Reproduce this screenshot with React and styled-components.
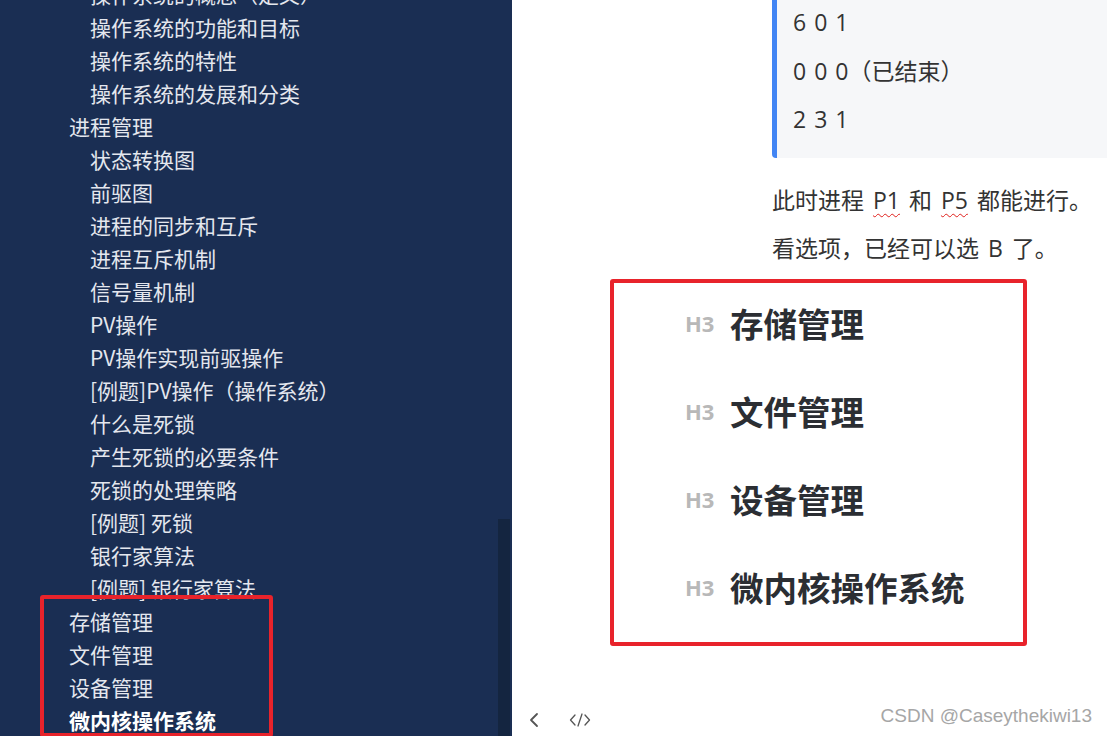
import React from "react";
import styled, { createGlobalStyle } from "styled-components";

const GlobalStyle = createGlobalStyle`
  html, body { margin: 0; padding: 0; }
  body { overflow: hidden; background: #ffffff; }
  * { box-sizing: border-box; }
`;

const CJK = `"Noto Sans CJK SC", "Noto Sans", sans-serif`;
const BODY = `"Open Sans", "Noto Sans CJK SC", sans-serif`;

const Page = styled.div`
  display: flex;
  width: 1107px;
  height: 736px;
  overflow: hidden;
`;

const Sidebar = styled.aside`
  position: relative;
  width: 512px;
  flex: none;
  height: 100%;
  background: #1a2e53;
  overflow: hidden;
`;

const TocList = styled.ul`
  list-style: none;
  margin: -22px 0 0;
  padding: 0;
`;

const TocItem = styled.li`
  height: 33px;
  line-height: 33px;
  padding-left: ${(p) => (p.$level === 1 ? 69 : 90)}px;
  font-family: ${CJK};
  font-size: 21px;
  color: ${(p) => (p.$bold ? "#ffffff" : "#e4e7ee")};
  font-weight: ${(p) => (p.$bold ? 700 : 400)};
  white-space: nowrap;
`;

const ScrollThumb = styled.div`
  position: absolute;
  left: 498px;
  top: 519px;
  width: 12px;
  bottom: 0;
  background: #142540;
`;

const SideMark = styled.div`
  position: absolute;
  left: 40px;
  top: 595px;
  width: 233px;
  height: 142px;
  border: 4px solid #e8232b;
  border-radius: 3px;
`;

const Main = styled.main`
  position: relative;
  flex: 1;
  height: 100%;
  display: flex;
  flex-direction: column;
  background: #ffffff;
  overflow: hidden;
`;

const Article = styled.div`
  display: flex;
  flex-direction: column;
`;

const CodeBlock = styled.div`
  margin: -2px 0 0 260px;
  padding: 0 0 14.5px 16px;
  background: #f6f7f9;
  border-left: 5px solid #4285f4;
  border-bottom-left-radius: 4px;
  font-family: ${BODY};
  font-size: 23px;
  word-spacing: 2px;
  color: #333333;
`;

const CodeLine = styled.div`
  height: 48.5px;
  line-height: 48.5px;
  white-space: nowrap;
`;

const Para = styled.p`
  margin: ${(p) => (p.$first ? "18px" : "0")} 0 0 260px;
  height: 48px;
  line-height: 48px;
  font-family: ${BODY};
  font-size: 23px;
  word-spacing: 3px;
  color: #333333;
  white-space: nowrap;
`;

const Misspelled = styled.span`
  text-decoration: underline wavy #e0201c;
  text-decoration-thickness: 1px;
  text-underline-offset: 4px;
`;

const MarkBox = styled.section`
  margin: 7px 0 0 98px;
  width: 417px;
  padding: 0 0 7px 71px;
  border: 4px solid #e8232b;
  border-radius: 3px;
`;

const HeadingRow = styled.div`
  height: 88px;
  padding-bottom: 8px;
  display: flex;
  align-items: center;
  gap: 15px;
`;

const HeadLabel = styled.span`
  font-family: "Open Sans", sans-serif;
  font-weight: 700;
  font-size: 22px;
  color: #b8b8b8;
  width: 30px;
  line-height: 1;
`;

const Heading = styled.h3`
  margin: 0;
  font-family: ${CJK};
  font-weight: 700;
  font-size: 33.5px;
  line-height: 1.2;
  color: #2b2e33;
  white-space: nowrap;
`;

const Footer = styled.footer`
  margin-top: auto;
  height: 32px;
  display: flex;
  align-items: center;
  gap: 22px;
  padding-left: 10px;
  color: #555555;
`;

const IconButton = styled.span`
  display: flex;
  align-items: center;
  justify-content: center;
  width: 24px;
  height: 24px;
`;

const Watermark = styled.div`
  position: absolute;
  right: 15px;
  bottom: 8px;
  font-family: "Liberation Sans", Arial, sans-serif;
  font-size: 19px;
  line-height: 24px;
  color: #a6a6a6;
  white-space: nowrap;
`;

const toc = [
  { t: "操作系统的概念（定义）", l: 2 },
  { t: "操作系统的功能和目标", l: 2 },
  { t: "操作系统的特性", l: 2 },
  { t: "操作系统的发展和分类", l: 2 },
  { t: "进程管理", l: 1 },
  { t: "状态转换图", l: 2 },
  { t: "前驱图", l: 2 },
  { t: "进程的同步和互斥", l: 2 },
  { t: "进程互斥机制", l: 2 },
  { t: "信号量机制", l: 2 },
  { t: "PV操作", l: 2 },
  { t: "PV操作实现前驱操作", l: 2 },
  { t: "[例题]PV操作（操作系统）", l: 2 },
  { t: "什么是死锁", l: 2 },
  { t: "产生死锁的必要条件", l: 2 },
  { t: "死锁的处理策略", l: 2 },
  { t: "[例题] 死锁", l: 2 },
  { t: "银行家算法", l: 2 },
  { t: "[例题] 银行家算法", l: 2 },
  { t: "存储管理", l: 1 },
  { t: "文件管理", l: 1 },
  { t: "设备管理", l: 1 },
  { t: "微内核操作系统", l: 1, b: true },
];

const headings = ["存储管理", "文件管理", "设备管理", "微内核操作系统"];

export default function App() {
  return (
    <>
      <GlobalStyle />
      <Page>
        <Sidebar>
          <TocList>
            {toc.map((it, i) => (
              <TocItem key={i} $level={it.l} $bold={it.b}>
                {it.t}
              </TocItem>
            ))}
          </TocList>
          <ScrollThumb />
          <SideMark />
        </Sidebar>
        <Main>
          <Article>
            <CodeBlock>
              <CodeLine>6 0 1</CodeLine>
              <CodeLine>0 0 0（已结束）</CodeLine>
              <CodeLine>2 3 1</CodeLine>
            </CodeBlock>
            <Para $first>
              此时进程 <Misspelled>P1</Misspelled> 和 <Misspelled>P5</Misspelled> 都能进行。
            </Para>
            <Para>看选项，已经可以选 B 了。</Para>
            <MarkBox>
              {headings.map((h) => (
                <HeadingRow key={h}>
                  <HeadLabel>H3</HeadLabel>
                  <Heading>{h}</Heading>
                </HeadingRow>
              ))}
            </MarkBox>
          </Article>
          <Footer>
            <IconButton>
              <svg width="14" height="18" viewBox="0 0 14 18" fill="none" stroke="#555" strokeWidth="1.8" strokeLinecap="round" strokeLinejoin="round">
                <path d="M10 3 L4 9 L10 15" />
              </svg>
            </IconButton>
            <IconButton>
              <svg width="24" height="18" viewBox="0 0 24 18" fill="none" stroke="#555" strokeWidth="1.3" strokeLinecap="round" strokeLinejoin="round">
                <path d="M7 4 L2.5 9 L7 14" />
                <path d="M14 3 L10 15" />
                <path d="M17 4 L21.5 9 L17 14" />
              </svg>
            </IconButton>
          </Footer>
          <Watermark>CSDN @Caseythekiwi13</Watermark>
        </Main>
      </Page>
    </>
  );
}
